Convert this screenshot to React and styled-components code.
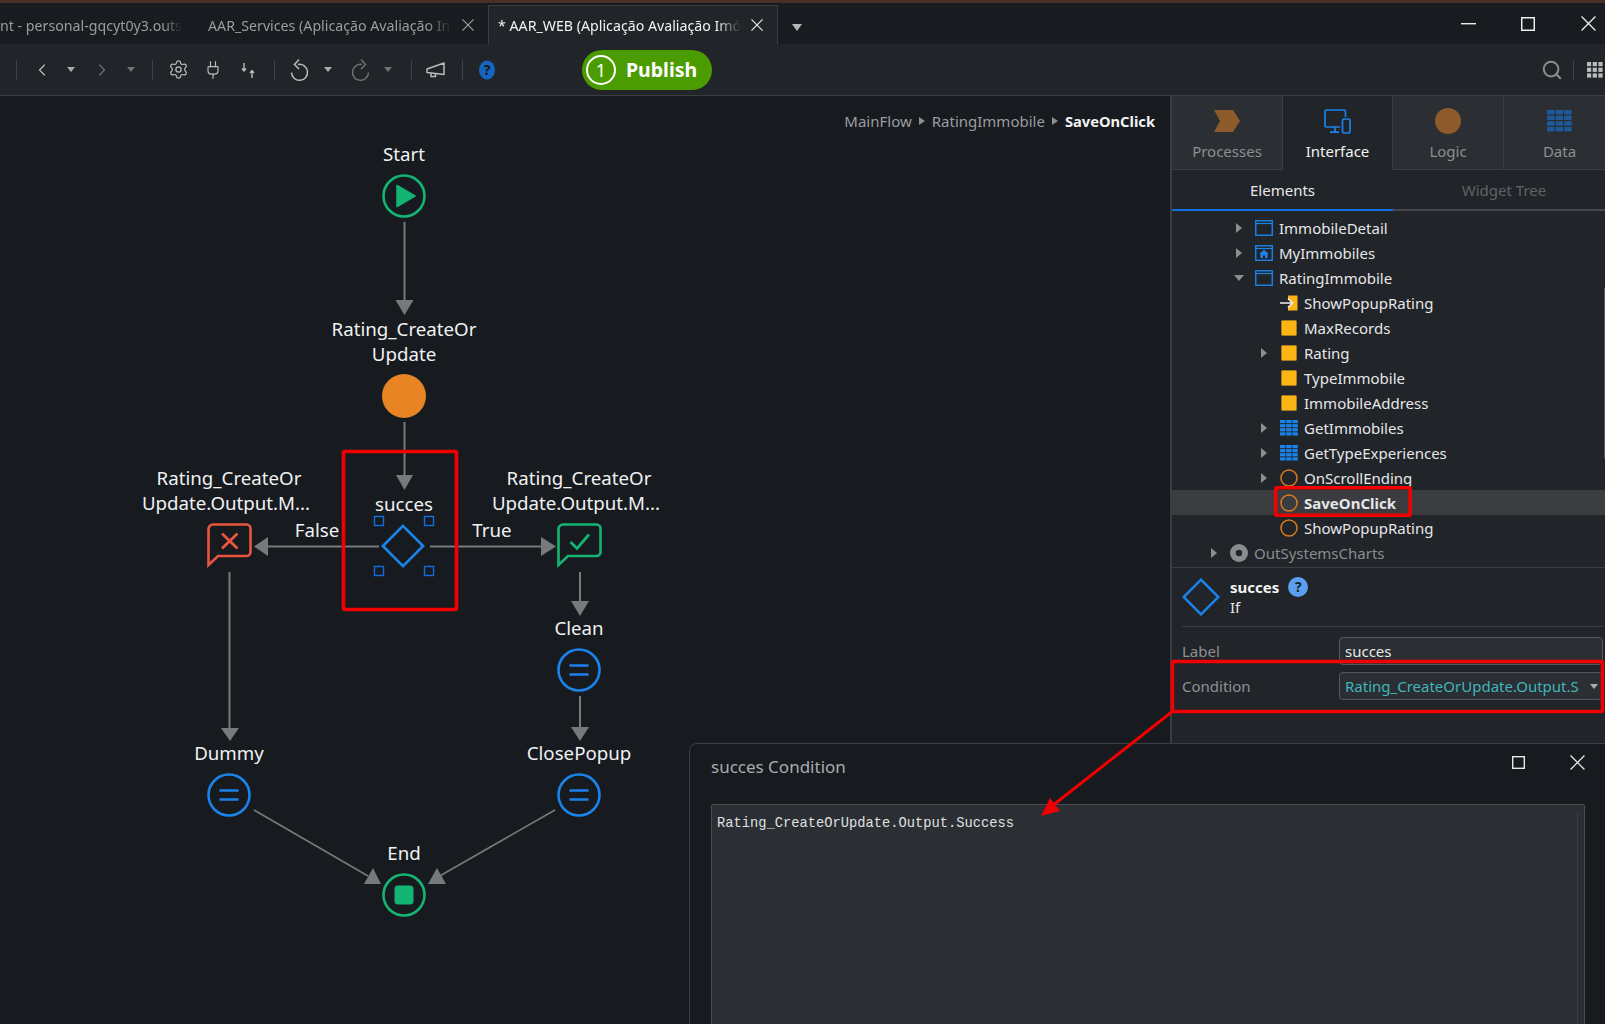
import React from 'react';
import styled, {createGlobalStyle} from 'styled-components';
import {ChevronLeft, ChevronRight, Settings, Plug, Search} from 'lucide-react';

const GlobalStyle = createGlobalStyle`
  html, body { margin: 0; padding: 0; background: #171a1f; }
  body { font-family: "Noto Sans", "Open Sans", sans-serif; }
  * { box-sizing: border-box; }
`

const Page = styled.div`
  position: relative;
  width: 1605px;
  height: 1024px;
  overflow: hidden;
  display: flex;
  flex-direction: column;
  background: #171a1f;
`

const TopStrip = styled.div`
  height: 3px;
  background: #4a2e28;
  flex: none;
`

const TabBar = styled.div`
  height: 41px;
  flex: none;
  display: flex;
  align-items: flex-end;
  background: #181b20;
`

const Tab = styled.div`
  height: ${props => props.$active ? 39 : 38}px;
  width: ${props => props.$w}px;
  padding-left: ${props => props.$pl}px;
  display: flex;
  align-items: center;
  font-size: 14.2px;
  color: ${props => props.$active ? "#f2f3f3" : "#9a9c9f"};
  background: ${props => props.$active ? "#212429" : "transparent"};
  border: ${props => props.$active ? "1px solid #3a3d42" : "none"};
  border-bottom: none;
`

const TabTitle = styled.span`
  width: ${props => props.$w}px;
  white-space: nowrap;
  overflow: hidden;
  flex: none;
  -webkit-mask-image: linear-gradient(to right, #000 90%, transparent 100%);
  mask-image: linear-gradient(to right, #000 90%, transparent 100%);
`

const TabClose = styled.span`
  display: flex;
  margin-left: ${props => props.$ml}px;
  color: ${props => props.$active ? "#e8e9ea" : "#a0a2a5"};
`

const TabMenu = styled.span`
  margin: 0 0 13px 14px;
  width: 0;
  height: 0;
  border-left: 5px solid transparent;
  border-right: 5px solid transparent;
  border-top: 7px solid #b5b7ba;
`

const WindowButtons = styled.div`
  margin-left: auto;
  display: flex;
  align-items: center;
  align-self: center;
  color: #eceded;
`

const WindowButton = styled.span`
  display: flex;
  width: 16px;
  justify-content: center;
  margin-left: ${props => props.$ml || 0}px;
  margin-right: ${props => props.$mr || 0}px;
`

const Toolbar = styled.div`
  height: 52px;
  flex: none;
  display: flex;
  align-items: center;
  padding: 0 2px 0 16px;
  background: #212429;
  border-bottom: 1px solid #3a3d42;
`

const Separator = styled.span`
  width: 1px;
  height: 20px;
  flex: none;
  background: #3f4247;
  margin-left: ${props => props.$ml || 0}px;
`

const ToolIcon = styled.span`
  width: ${props => props.$w || 24}px;
  height: 24px;
  flex: none;
  display: flex;
  align-items: center;
  justify-content: center;
  margin-left: ${props => props.$ml}px;
  color: ${props => props.$dim ? "#6f7175" : "#b9bbbd"};
`

const Caret = styled.span`
  display: block;
  flex: none;
  width: 0;
  height: 0;
  border-left: 4px solid transparent;
  border-right: 4px solid transparent;
  border-top: 5px solid ${props => props.$dim ? "#6f7175" : "#a9abae"};
`

const PublishButton = styled.div`
  width: 130px;
  height: 40px;
  flex: none;
  margin-left: 83px;
  display: flex;
  align-items: center;
  gap: 10px;
  padding-left: 4px;
  border-radius: 20px;
  background: #4a9c00;
  color: #fff;
  font-size: 19.5px;
  font-weight: 700;
`

const PublishCount = styled.span`
  width: 30px;
  height: 30px;
  border: 2px solid #fff;
  border-radius: 50%;
  display: flex;
  align-items: center;
  justify-content: center;
  font-size: 18px;
  font-weight: 400;
`

const RightTools = styled.div`
  margin-left: auto;
  display: flex;
  align-items: center;
`

const Main = styled.div`
  flex: 1;
  display: flex;
  min-height: 0;
`

const Canvas = styled.div`
  position: relative;
  width: 1170px;
  flex: none;
  background: #171a1f;
`

const Breadcrumb = styled.div`
  display: flex;
  justify-content: flex-end;
  align-items: center;
  gap: 7px;
  padding: 15px 15px 0 0;
  font-size: 15px;
  line-height: 20px;
  color: #9b9da0;
`

const CrumbArrow = styled.span`
  width: 0;
  height: 0;
  border-top: 4.5px solid transparent;
  border-bottom: 4.5px solid transparent;
  border-left: 6px solid #8c8e91;
`

const CrumbCurrent = styled.b`
  color: #f2f3f3;
  font-weight: 700;
  font-size: 14.7px;
`

const Edges = styled.svg`
  position: absolute;
  left: 0;
  top: 0;
`

// free canvas: a node stands where the flow puts it, anchored on the bottom of its icon
const Node = styled.div`
  position: absolute;
  left: ${props => props.$x}px;
  top: ${props => props.$y + 22}px;
  transform: translate(-50%, -100%);
  display: flex;
  flex-direction: column;
  align-items: center;
  gap: 8px;
  width: 220px;
`

const NodeLabel = styled.div`
  font-size: 18.7px;
  line-height: 25px;
  color: #f0f1f2;
  text-align: center;
`

const TruncatedLine = styled.span`
  display: inline-block;
  padding-right: 6px;
`

const OffsetIcon = styled.span`
  display: flex;
  margin-right: 3px;
`

const EdgeLabel = styled.div`
  position: absolute;
  left: ${props => props.$x}px;
  top: ${props => props.$y}px;
  transform: translate(-50%, -50%);
  font-size: 18.7px;
  color: #f0f1f2;
`

const Panel = styled.div`
  flex: 1;
  display: flex;
  flex-direction: column;
  background: #212429;
  border-left: 2px solid #3a3d42;
`

const ModuleTabs = styled.div`
  height: 74px;
  flex: none;
  display: grid;
  grid-template-columns: 110px 110px 111px 1fr;
`

const ModuleTab = styled.div`
  display: flex;
  flex-direction: column;
  align-items: center;
  padding-top: 12px;
  padding-left: ${props => props.$last ? 10 : 0}px;
  font-size: 15px;
  color: ${props => props.$active ? "#f2f3f3" : "#8c8e91"};
  background: ${props => props.$active ? "#212429" : "#2b2e32"};
  border-left: ${props => props.$first ? "none" : "1px solid #3a3d42"};
  border-bottom: ${props => props.$active ? "none" : "1px solid #3a3d42"};
`

const ModuleIcon = styled.span`
  height: 26px;
  display: flex;
  align-items: center;
  margin-bottom: 7px;
`

const SubTabs = styled.div`
  height: 41px;
  flex: none;
  display: grid;
  grid-template-columns: 221px 1fr;
`

const SubTab = styled.div`
  display: flex;
  align-items: center;
  justify-content: center;
  font-size: 15px;
  padding-left: ${props => props.$active ? 0 : 10}px;
  color: ${props => props.$active ? "#e8e9ea" : "#5f6265"};
  border-bottom: ${props => props.$active ? "2px solid #0f6fe0" : "2px solid #44474b"};
`

const Tree = styled.div`
  position: relative;
  height: 357px;
  flex: none;
  padding-top: 4px;
  border-bottom: 1px solid #3a3d42;

  &::after {
    content: "";
    position: absolute;
    right: 0;
    top: 77px;
    width: 1px;
    height: 170px;
    background: #55585c;
  }
`

const TreeRow = styled.div`
  height: 25px;
  display: flex;
  align-items: center;
  padding-left: ${props => 34 + props.$level * 25}px;
  font-size: 15px;
  color: ${props => props.$dim ? "#8a8c8f" : "#e6e7e8"};
  font-weight: ${props => props.$selected ? 700 : 400};
  background: ${props => props.$selected ? "#3a3c40" : "transparent"};
`

const TreeToggle = styled.span`
  width: 16px;
  display: flex;
  justify-content: center;
  flex: none;
`

const ClosedArrow = styled.span`
  width: 0;
  height: 0;
  border-top: 5px solid transparent;
  border-bottom: 5px solid transparent;
  border-left: 6px solid #8c8e91;
`

const OpenArrow = styled.span`
  width: 0;
  height: 0;
  border-left: 5.5px solid transparent;
  border-right: 5.5px solid transparent;
  border-top: 6px solid #8c8e91;
`

const TreeIcon = styled.span`
  width: 20px;
  height: 20px;
  flex: none;
  display: flex;
  align-items: center;
  justify-content: center;
  margin: 0 5px 0 7px;
`

const Properties = styled.div`
  padding: 0 2px 0 10px;
`

const PropHeader = styled.div`
  height: 59px;
  display: flex;
  align-items: center;
  gap: 10px;
  border-bottom: 1px solid #3a3d42;
`

const PropTitle = styled.div`
  font-size: 15px;
  line-height: 20px;
  color: #e8e9ea;
`

const PropName = styled.div`
  display: flex;
  align-items: center;
  gap: 9px;
  font-weight: 700;
  color: #f2f3f3;
`

const HelpDot = styled.span`
  width: 20px;
  height: 20px;
  border-radius: 50%;
  background: #5c9ff0;
  color: #1b1f26;
  display: flex;
  align-items: center;
  justify-content: center;
  font-size: 14px;
  font-weight: 700;
`

const PropRows = styled.div`
  display: grid;
  grid-template-columns: 157px 1fr;
  row-gap: 7px;
  padding-top: 10px;
  align-items: center;
`

const PropLabel = styled.div`
  font-size: 15px;
  color: #8f9194;
`

const PropInput = styled.div`
  height: 28px;
  display: flex;
  align-items: center;
  padding: 0 4px 0 5px;
  font-size: 15px;
  color: ${props => props.$code ? "#3fb5bd" : "#e8e9ea"};
  background: #2b2e32;
  border: 1px solid #55585c;
  border-radius: 4px;
  overflow: hidden;
  white-space: nowrap;
`

const InputText = styled.span`
  flex: 1;
  overflow: hidden;
`

const Dialog = styled.div`
  position: absolute;
  left: 689px;
  top: 743px;
  width: 940px;
  height: 320px;
  background: #171a1f;
  border: 1px solid #3c3f43;
  border-radius: 8px;
  padding: 0 0 0 21px;
`

const DialogHead = styled.div`
  height: 60px;
  display: flex;
  align-items: flex-start;
  color: #e8e9ea;
`

const DialogTitle = styled.div`
  width: 133px;
  white-space: nowrap;
  font-size: 17px;
  line-height: 22px;
  margin-top: 12px;
  color: #a9abae;
`

const DialogButton = styled.span`
  display: flex;
  margin-top: ${props => props.$mt}px;
  margin-left: ${props => props.$ml}px;
`

const Editor = styled.div`
  position: relative;
  width: 874px;
  height: 260px;
  background: #2b2e32;
  border: 1px solid #4a4d50;
  border-radius: 2px;
  padding: 10px 5px;
  font-family: "Liberation Mono", monospace;
  font-size: 13.75px;
  line-height: 18px;
  color: #dfe0e1;

  &::after {
    content: "";
    position: absolute;
    right: 6px;
    top: 8px;
    bottom: 0;
    width: 1px;
    background: #3a3d41;
  }
`

const Annotations = styled.svg`
  position: absolute;
  left: 0;
  top: 0;
  pointer-events: none;
`

const GREEN = "#14b573"
const BLUE = "#1a83ea"
const GRAY = "#77797c"

const Ring = ({color, children}) => (
  <svg width="44" height="44" viewBox="0 0 44 44">
    <circle cx="22" cy="22" r="20.5" fill="none" stroke={color} strokeWidth="2.6" />
    {children}
  </svg>
)

const AssignNode = () => (
  <Ring color={BLUE}>
    <path d="M12.5 17.5H31.5M12.5 26.5H31.5" stroke={BLUE} strokeWidth="2.6" />
  </Ring>
)

const MessageIcon = ({color, children}) => (
  <svg width="45" height="45" viewBox="0 0 45 45">
    <path d="M6 1.5H39.5a4 4 0 0 1 4 4V29a4 4 0 0 1-4 4H11L1.5 42V6a4.5 4.5 0 0 1 4.5-4.5Z" fill="none" stroke={color} strokeWidth="2.6" />
    {children}
  </svg>
)

const IfIcon = ({size, width}) => (
  <svg width={size} height={size} viewBox="0 0 46 46">
    <path d="M23 2L44 23L23 44L2 23Z" fill="none" stroke={BLUE} strokeWidth={width} />
  </svg>
)

const CrossIcon = ({size, width}) => (
  <svg width={size} height={size} viewBox="0 0 14 14">
    <path d="M0.5 0.5L13.5 13.5M13.5 0.5L0.5 13.5" fill="none" stroke="currentColor" strokeWidth={width} />
  </svg>
)

const SquareIcon = ({size, width}) => (
  <svg width={size} height={size} viewBox="0 0 14 14">
    <rect x="0.75" y="0.75" width="12.5" height="12.5" fill="none" stroke="currentColor" strokeWidth={width} />
  </svg>
)

const ScreenIcon = ({home}) => (
  <svg width="18" height="16" viewBox="0 0 18 16">
    <rect x="0.75" y="0.75" width="16.5" height="14.5" fill="none" stroke={BLUE} strokeWidth="1.4" />
    <path d="M1 3.5H17" stroke={BLUE} strokeWidth="1.2" />
    {home && <path d="M9 4.8L14 9H12.6V13H10V10.4H8V13H5.4V9H4Z" fill={BLUE} />}
  </svg>
)

const TableIcon = ({color, w, h}) => (
  <svg width={w} height={h} viewBox="0 0 18 16">
    {[0, 1, 2, 3].map(row => [0, 1, 2].map(col => (
      <rect key={row + "-" + col} x={col * 6.2} y={row * 4.1} width="5.4" height="3.2" fill={color} />
    )))}
  </svg>
)

const treeIcons = {
  screen: <ScreenIcon />,
  home: <ScreenIcon home />,
  variable: <svg width="16" height="16"><rect x="0.5" y="0.5" width="15" height="15" rx="1" fill="#fdb515" stroke="#a57c20" /></svg>,
  input: (
    <svg width="18" height="16" viewBox="0 0 18 16">
      <path d="M8 0.5H17.5V15.5H8V11H11V5H8Z" fill="#fdb515" />
      <path d="M0 8H12M8 3.5L12.5 8L8 12.5" fill="none" stroke="#eeeeee" strokeWidth="1.6" />
    </svg>
  ),
  table: <TableIcon color={BLUE} w="18" h="16" />,
  action: <svg width="18" height="18"><circle cx="9" cy="9" r="8" fill="none" stroke="#d97a1f" strokeWidth="1.5" /></svg>,
  module: <svg width="18" height="18"><circle cx="9" cy="9" r="9" fill="#8a8c8f" /><circle cx="9" cy="9" r="3.2" fill="#212429" /></svg>,
}

const treeRows = [
  {level: 1, toggle: "closed", icon: "screen", text: "ImmobileDetail"},
  {level: 1, toggle: "closed", icon: "home", text: "MyImmobiles"},
  {level: 1, toggle: "open", icon: "screen", text: "RatingImmobile"},
  {level: 2, icon: "input", text: "ShowPopupRating"},
  {level: 2, icon: "variable", text: "MaxRecords"},
  {level: 2, toggle: "closed", icon: "variable", text: "Rating"},
  {level: 2, icon: "variable", text: "TypeImmobile"},
  {level: 2, icon: "variable", text: "ImmobileAddress"},
  {level: 2, toggle: "closed", icon: "table", text: "GetImmobiles"},
  {level: 2, toggle: "closed", icon: "table", text: "GetTypeExperiences"},
  {level: 2, toggle: "closed", icon: "action", text: "OnScrollEnding"},
  {level: 2, icon: "action", text: "SaveOnClick", selected: true},
  {level: 2, icon: "action", text: "ShowPopupRating"},
  {level: 0, toggle: "closed", icon: "module", text: "OutSystemsCharts", dim: true},
]

const UndoIcon = ({flip}) => (
  <svg width="22" height="24" viewBox="0 0 22 24" style={flip ? {transform: "scaleX(-1)"} : undefined}>
    <path d="M9 6.5a8 8 0 1 1-6.5 8M10 1.5L5.5 6.5L10 11" fill="none" stroke="currentColor" strokeWidth="1.5" />
  </svg>
)

const MergeIcon = () => (
  <svg width="20" height="22" viewBox="0 0 20 22">
    <path d="M6 4V11.5M4 9.5L6 12L8 9.5M14 19V12M12 14L14 11.5L16 14" fill="none" stroke="currentColor" strokeWidth="1.4" />
  </svg>
)

const HornIcon = () => (
  <svg width="20" height="18" viewBox="0 0 20 18">
    <path d="M1 8L18 2V13.5L1 11.5Z" fill="none" stroke="currentColor" strokeWidth="1.5" strokeLinejoin="round" />
    <path d="M5 12V15.5H9.5V13" fill="none" stroke="currentColor" strokeWidth="1.5" />
  </svg>
)

const GridIcon = () => (
  <svg width="16" height="16" viewBox="0 0 16 16">
    {[0, 1, 2].map(row => [0, 1, 2].map(col => (
      <rect key={row + "-" + col} x={col * 5.7} y={row * 5.7} width="4.2" height="4.2" fill="#b9bbbd" />
    )))}
  </svg>
)

const Edge = ({d}) => <path d={d} fill="none" stroke={GRAY} strokeWidth="2" />
const Head = ({points}) => <polygon points={points} fill={GRAY} />

const Handle = ({x, y}) => <rect x={x} y={y} width="9" height="9" fill="none" stroke="#0f6fe0" strokeWidth="1.4" />

export default function App() {
  return (
    <Page>
      <GlobalStyle />
      <TopStrip />
      <TabBar>
        <Tab $w={208} $pl={0}>
          <TabTitle $w={182}>nt - personal-gqcyt0y3.outsy</TabTitle>
        </Tab>
        <Tab $w={280} $pl={0}>
          <TabTitle $w={244}>AAR_Services (Aplicação Avaliação In</TabTitle>
          <TabClose $ml={10}><CrossIcon size={12} width="1.3" /></TabClose>
        </Tab>
        <Tab $active $w={290} $pl={9}>
          <TabTitle $w={243}>* AAR_WEB (Aplicação Avaliação Imó</TabTitle>
          <TabClose $active $ml={10}><CrossIcon size={12} width="1.4" /></TabClose>
        </Tab>
        <TabMenu />
        <WindowButtons>
          <WindowButton>
            <svg width="15" height="2"><rect width="15" height="1.4" fill="currentColor" /></svg>
          </WindowButton>
          <WindowButton $ml={44}><SquareIcon size={14} width="1.5" /></WindowButton>
          <WindowButton $ml={44} $mr={9}><CrossIcon size={15} width="1.2" /></WindowButton>
        </WindowButtons>
      </TabBar>

      <Toolbar>
        <Separator />
        <ToolIcon $ml={13}><ChevronLeft size={20} strokeWidth={1.4} /></ToolIcon>
        <ToolIcon $ml={5}><Caret /></ToolIcon>
        <ToolIcon $ml={7} $dim><ChevronRight size={20} strokeWidth={1.4} /></ToolIcon>
        <ToolIcon $ml={5}><Caret $dim /></ToolIcon>
        <Separator $ml={9} />
        <ToolIcon $ml={13}><Settings size={21} strokeWidth={1.4} /></ToolIcon>
        <ToolIcon $ml={11}><Plug size={20} strokeWidth={1.4} /></ToolIcon>
        <ToolIcon $ml={11}><MergeIcon /></ToolIcon>
        <Separator $ml={14} />
        <ToolIcon $ml={13}><UndoIcon /></ToolIcon>
        <ToolIcon $ml={4}><Caret /></ToolIcon>
        <ToolIcon $ml={8} $dim><UndoIcon flip /></ToolIcon>
        <ToolIcon $ml={4}><Caret $dim /></ToolIcon>
        <Separator $ml={11} />
        <ToolIcon $ml={12}><HornIcon /></ToolIcon>
        <Separator $ml={14} />
        <ToolIcon $ml={12}>
          <svg width="18" height="20" viewBox="0 0 18 20">
            <ellipse cx="9" cy="10" rx="8" ry="9.5" fill="#1565c0" />
            <text x="9" y="15" textAnchor="middle" fontSize="14" fontWeight="700" fill="#12161c" fontFamily="Noto Sans">?</text>
          </svg>
        </ToolIcon>
        <PublishButton>
          <PublishCount>1</PublishCount>
          <span>Publish</span>
        </PublishButton>
        <RightTools>
          <ToolIcon><Search size={22} strokeWidth={2.2} color="#8a8c8f" /></ToolIcon>
          <Separator $ml={9} />
          <ToolIcon $w={16} $ml={13}><GridIcon /></ToolIcon>
        </RightTools>
      </Toolbar>

      <Main>
        <Canvas>
          <Breadcrumb>
            <span>MainFlow</span>
            <CrumbArrow />
            <span>RatingImmobile</span>
            <CrumbArrow />
            <CrumbCurrent>SaveOnClick</CrumbCurrent>
          </Breadcrumb>

          <Edges width="1170" height="928" viewBox="0 0 1170 928">
            <Edge d="M404.5 126V205" />
            <Head points="395.5,204 413.5,204 404.5,219" />
            <Edge d="M404.5 326V380" />
            <Head points="396,379 413,379 404.5,394" />
            <Edge d="M379 450.5H268" />
            <Head points="268,441 268,460 254,450.5" />
            <Edge d="M430 450.5H542" />
            <Head points="541,441 541,460 556,450.5" />
            <Edge d="M229.5 476V634" />
            <Head points="221,632 239,632 230,645" />
            <Edge d="M580 476V506" />
            <Head points="571,505 589,505 580,520" />
            <Edge d="M580 600V632" />
            <Head points="571,631 589,631 580,645" />
            <path d="M254 714L368 780" fill="none" stroke={GRAY} strokeWidth="1.6" />
            <Head points="373,772 381,788 364,788" />
            <path d="M555 714L438 781" fill="none" stroke={GRAY} strokeWidth="1.6" />
            <Head points="437,772 446,788 428,788" />
            <Handle x="374.5" y="420.5" />
            <Handle x="424.5" y="420.5" />
            <Handle x="374.5" y="470.5" />
            <Handle x="424.5" y="470.5" />
          </Edges>

          <Node $x={404} $y={100}>
            <NodeLabel>Start</NodeLabel>
            <Ring color={GREEN}><path d="M15 11.5L33 22L15 32.5Z" fill={GREEN} stroke={GREEN} strokeWidth="1.5" strokeLinejoin="round" /></Ring>
          </Node>
          <Node $x={404} $y={299.5}>
            <NodeLabel>Rating_CreateOr<br />Update</NodeLabel>
            <svg width="44" height="44"><circle cx="22" cy="22" r="22" fill="#e98424" /></svg>
          </Node>
          <Node $x={404} $y={450}>
            <NodeLabel>succes</NodeLabel>
            <OffsetIcon><IfIcon size={44} width="2.8" /></OffsetIcon>
          </Node>
          <Node $x={229} $y={450}>
            <NodeLabel>Rating_CreateOr<br /><TruncatedLine>Update.Output.M...</TruncatedLine></NodeLabel>
            <MessageIcon color="#e8563f">
              <path d="M15 10.5L30.5 25.5M30.5 10.5L15 25.5" stroke="#e8563f" strokeWidth="2.8" />
            </MessageIcon>
          </Node>
          <Node $x={579} $y={450}>
            <NodeLabel>Rating_CreateOr<br /><TruncatedLine>Update.Output.M...</TruncatedLine></NodeLabel>
            <MessageIcon color={GREEN}>
              <path d="M13.5 19L20 25.5L32 11.5" fill="none" stroke={GREEN} strokeWidth="2.8" />
            </MessageIcon>
          </Node>
          <Node $x={579} $y={574}>
            <NodeLabel>Clean</NodeLabel>
            <AssignNode />
          </Node>
          <Node $x={229} $y={699}>
            <NodeLabel>Dummy</NodeLabel>
            <AssignNode />
          </Node>
          <Node $x={579} $y={699}>
            <NodeLabel>ClosePopup</NodeLabel>
            <AssignNode />
          </Node>
          <Node $x={404} $y={799}>
            <NodeLabel>End</NodeLabel>
            <Ring color={GREEN}><rect x="12.5" y="12.5" width="19" height="19" rx="3.5" fill={GREEN} /></Ring>
          </Node>

          <EdgeLabel $x={317} $y={433}>False</EdgeLabel>
          <EdgeLabel $x={492} $y={433}>True</EdgeLabel>
        </Canvas>

        <Panel>
          <ModuleTabs>
            <ModuleTab $first>
              <ModuleIcon>
                <svg width="26" height="22" viewBox="0 0 26 22"><path d="M0 0H19L26 11L19 22H0L6 11Z" fill="#8c5a2b" /></svg>
              </ModuleIcon>
              Processes
            </ModuleTab>
            <ModuleTab $active>
              <ModuleIcon>
                <svg width="27" height="25" viewBox="0 0 27 25" fill="none" stroke={BLUE} strokeWidth="1.7">
                  <path d="M16 18H2.5a1.5 1.5 0 0 1-1.5-1.5V2.5A1.5 1.5 0 0 1 2.5 1H20a1.5 1.5 0 0 1 1.5 1.5V8" />
                  <path d="M11 18V23M6 23.2H15" />
                  <rect x="18.5" y="10" width="7.5" height="14" rx="1.5" />
                </svg>
              </ModuleIcon>
              Interface
            </ModuleTab>
            <ModuleTab>
              <ModuleIcon>
                <svg width="26" height="26"><circle cx="13" cy="13" r="13" fill="#8c5a2b" /></svg>
              </ModuleIcon>
              Logic
            </ModuleTab>
            <ModuleTab $last>
              <ModuleIcon><TableIcon color="#1d5a9c" w="27" h="22" /></ModuleIcon>
              Data
            </ModuleTab>
          </ModuleTabs>

          <SubTabs>
            <SubTab $active>Elements</SubTab>
            <SubTab>Widget Tree</SubTab>
          </SubTabs>

          <Tree>
            {treeRows.map((row, i) => (
              <TreeRow key={i} $level={row.level} $selected={row.selected} $dim={row.dim}>
                <TreeToggle>
                  {row.toggle === "closed" && <ClosedArrow />}
                  {row.toggle === "open" && <OpenArrow />}
                </TreeToggle>
                <TreeIcon>{treeIcons[row.icon]}</TreeIcon>
                {row.text}
              </TreeRow>
            ))}
          </Tree>

          <Properties>
            <PropHeader>
              <IfIcon size={38} width="3" />
              <PropTitle>
                <PropName>succes <HelpDot>?</HelpDot></PropName>
                If
              </PropTitle>
            </PropHeader>
            <PropRows>
              <PropLabel>Label</PropLabel>
              <PropInput>succes</PropInput>
              <PropLabel>Condition</PropLabel>
              <PropInput $code>
                <InputText>Rating_CreateOrUpdate.Output.S</InputText>
                <Caret />
              </PropInput>
            </PropRows>
          </Properties>
        </Panel>
      </Main>

      <Dialog>
        <DialogHead>
          <DialogTitle>succes Condition</DialogTitle>
          <DialogButton $mt={12} $ml={668}><SquareIcon size={13} width="1.5" /></DialogButton>
          <DialogButton $mt={11} $ml={45}><CrossIcon size={15} width="1.2" /></DialogButton>
        </DialogHead>
        <Editor>Rating_CreateOrUpdate.Output.Success</Editor>
      </Dialog>

      <Annotations width="1605" height="1024" viewBox="0 0 1605 1024">
        <g fill="none" stroke="#f00000" strokeWidth="3.6">
          <rect x="343.5" y="451.5" width="113" height="158" rx="1" />
          <rect x="1275.7" y="487.7" width="134.5" height="27.5" rx="1" />
          <rect x="1172.5" y="661.5" width="430" height="50" rx="1" />
        </g>
        <path d="M1173 711L1052 806" stroke="#f00000" strokeWidth="3" />
        <polygon points="1041,816 1050,798 1060,811" fill="#f00000" />
      </Annotations>
    </Page>
  );
}
